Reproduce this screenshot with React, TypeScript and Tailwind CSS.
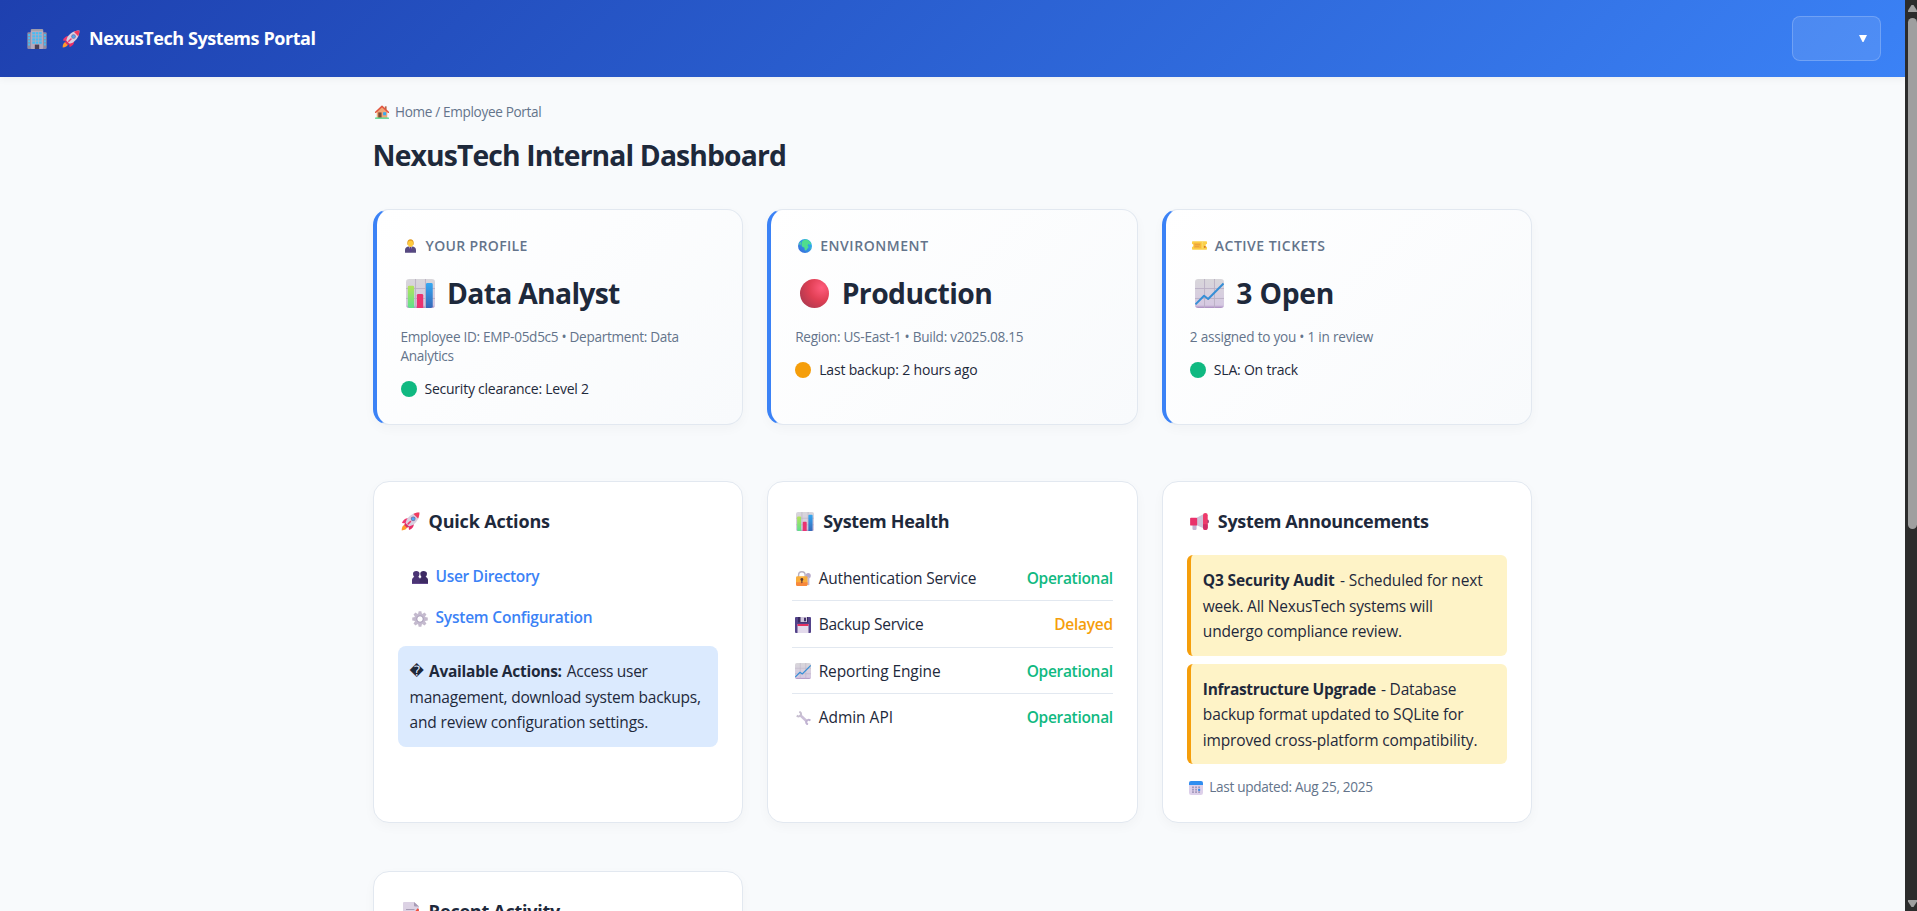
import type { ReactNode } from 'react';

type IconProps = { className?: string };

function Building({ className }: IconProps) {
  return (
    <svg className={className} viewBox="0 0 32 32">
      <rect x="0.5" y="5" width="9" height="27" rx="2" fill="#8f8aa3" />
      <rect x="22.5" y="5" width="9" height="27" rx="2" fill="#8f8aa3" />
      <rect x="6" y="0.5" width="20" height="31.5" rx="2.5" fill="#b5a9bd" />
      <rect x="6" y="0.5" width="20" height="2.5" rx="1.2" fill="#a3a0a8" />
      {[5, 10, 15, 20].map((y) => (
        <g key={y} fill="#45bdf5">
          <rect x="8.5" y={y} width="4.2" height="3.6" />
          <rect x="13.9" y={y} width="4.2" height="3.6" />
          <rect x="19.3" y={y} width="4.2" height="3.6" />
          <rect x="1.8" y={y + 3} width="3" height="3.4" />
          <rect x="27.2" y={y + 3} width="3" height="3.4" />
        </g>
      ))}
      <rect x="12.5" y="25" width="7" height="7" fill="#4a3f55" />
    </svg>
  );
}

function Rocket({ className }: IconProps) {
  return (
    <svg className={className} viewBox="0 0 32 32">
      <path d="M7 21c-4 1-6 5-5.800 10 5 0 8.500-2 9.800-6z" fill="#ff9a2b" />
      <path d="M12 10.500C8 10 3.500 13 1.500 18.500l7.500 1z" fill="#f0386e" />
      <path d="M21.500 20c.5 4-2.500 8.500-8 10.500l-1-7.500z" fill="#e92e68" />
      <path d="M31 1C22 1 14 5.500 9.500 13L7 20l5 5 7-2.500C26.500 18 31 10 31 1z" fill="#d9cfe0" />
      <path d="M31 1c0 4-.8 7.200-2.200 10L21 3.200C24 1.800 27.500 1 31 1z" fill="#f23a5e" />
      <path d="M7 18l7 7-4 1.500L5.500 22z" fill="#d92f66" />
      <path d="M12 20l4-4" stroke="#f0386e" strokeWidth="2.600" strokeLinecap="round" />
      <circle cx="20.500" cy="11.500" r="4" fill="#7c70a0" />
      <circle cx="20.500" cy="11.500" r="2.700" fill="#4ba8f5" />
    </svg>
  );
}

function House({ className }: IconProps) {
  return (
    <svg className={className} viewBox="0 0 32 32">
      <rect x="22.500" y="3" width="4" height="8" fill="#b5684a" />
      <path d="M4 15L16 4l12 11v14H4z" fill="#f0a878" />
      <path d="M1.500 16.500L16 3l14.500 13.500" fill="none" stroke="#e2553f" strokeWidth="3.600" strokeLinecap="round" strokeLinejoin="round" />
      <rect x="7.500" y="17" width="7.500" height="12" fill="#7b4a35" />
      <rect x="18.500" y="16.500" width="7" height="7" fill="#38aaf0" />
      <rect x="0" y="28.500" width="32" height="3" rx="1.500" fill="#3fd07a" />
    </svg>
  );
}

function OfficeWorker({ className }: IconProps) {
  return (
    <svg className={className} viewBox="0 0 26 32">
      <path d="M0 32v-7c0-5 4-8 9-8h8c5 0 9 3 9 8v7z" fill="#564a80" />
      <path d="M9.500 17L13 27l3.500-10z" fill="#e9e2f2" />
      <path d="M11.400 18h3.200l1 8-2.600 5-2.600-5z" fill="#5a3f8c" />
      <path d="M5.500 8c0-5 3-8 7.500-8s7.500 3 7.500 8v5H5.500z" fill="#e09a1f" />
      <path d="M7 8.500C7 5 9.500 3.500 13 3.500s6 1.500 6 5V12c0 4-3 6.500-6 6.500S7 16 7 12z" fill="#ffcb3d" />
    </svg>
  );
}

function Globe({ className }: IconProps) {
  return (
    <svg className={className} viewBox="0 0 32 32">
      <defs>
        <linearGradient id="sea" x1="1" y1="0" x2="0" y2="1">
          <stop offset="0" stopColor="#27c2f2" />
          <stop offset="1" stopColor="#3b62d8" />
        </linearGradient>
      </defs>
      <circle cx="16" cy="16" r="16" fill="url(#sea)" />
      <path d="M9 6c3-4 8-5.500 12-4.500 4 1.500 7.500 5 9 9.500l-3 2-3-2-2 4 2.500 3-3 4.500-3 4-3-1-1-6-4-1.500L8 14z" fill="#4fdd8e" />
      <path d="M2 11l4-5 2 3-3 6zM27 21l2.500-3-1.500 6z" fill="#49cfa0" />
    </svg>
  );
}

function Ticket({ className }: IconProps) {
  return (
    <svg className={className} viewBox="0 0 32 18">
      <path d="M1.500 0h29A1.500 1.500 0 0 1 32 1.500V6a3 3 0 0 0 0 6v4.500a1.500 1.500 0 0 1-1.500 1.500h-29A1.500 1.500 0 0 1 0 16.500V12a3 3 0 0 0 0-6V1.500A1.500 1.500 0 0 1 1.500 0z" fill="#fbd04a" />
      <rect x="4" y="3" width="15" height="12" rx="1" fill="#f7b63c" />
      <path d="M6 7h11M6 11h9" stroke="#e39a42" strokeWidth="1.500" />
      <path d="M22.500 1v16" stroke="#f7e7a0" strokeWidth="1.500" strokeDasharray="2 2" />
      <rect x="25.500" y="10" width="3.500" height="4" fill="#d57a2c" />
    </svg>
  );
}

function GridPaper({ id }: { id: string }) {
  return (
    <>
      <defs>
        <linearGradient id={id} x1="0" y1="0" x2="0" y2="1">
          <stop offset="0" stopColor="#d8d6da" />
          <stop offset="0.900" stopColor="#d6c9e2" />
          <stop offset="1" stopColor="#a98cc0" />
        </linearGradient>
      </defs>
      <rect width="32" height="32" rx="3.500" fill={`url(#${id})`} />
      <path d="M0 10.500h32M0 21.500h32M10.500 0v32M21.500 0v32" stroke="#b9b0c4" strokeWidth="1" />
    </>
  );
}

function BarChart({ className }: IconProps) {
  return (
    <svg className={className} viewBox="0 0 32 32" preserveAspectRatio="none">
      <defs>
        <linearGradient id="barGreen" x1="0" y1="0" x2="0" y2="1">
          <stop offset="0" stopColor="#b4e35a" />
          <stop offset="1" stopColor="#5fe08c" />
        </linearGradient>
        <linearGradient id="barBlue" x1="0" y1="0" x2="0" y2="1">
          <stop offset="0" stopColor="#35a8f2" />
          <stop offset="1" stopColor="#3768b8" />
        </linearGradient>
      </defs>
      <GridPaper id="paperBars" />
      <path d="M2 9a1.500 1.500 0 0 1 1.500-1.500H7.500A1.500 1.500 0 0 1 9 9v23H4l-2-1z" fill="url(#barGreen)" />
      <path d="M12 18a1.500 1.500 0 0 1 1.500-1.500h4A1.500 1.500 0 0 1 19 18v14h-7z" fill="#ea3370" />
      <path d="M22 6a1.500 1.500 0 0 1 1.500-1.500h4.500A1.500 1.500 0 0 1 29.500 6v25l-2 1H22z" fill="url(#barBlue)" />
    </svg>
  );
}

function LineChart({ className }: IconProps) {
  return (
    <svg className={className} viewBox="0 0 32 32">
      <GridPaper id="paperLine" />
      <path d="M0.500 28L10 18.500l4.500 3.500L31.500 5" fill="none" stroke="#368fd6" strokeWidth="2.200" strokeLinejoin="round" />
    </svg>
  );
}

function RedBall({ className }: IconProps) {
  return (
    <svg className={className} viewBox="0 0 32 32">
      <defs>
        <radialGradient id="ball" cx="0.750" cy="0.300" r="0.800">
          <stop offset="0" stopColor="#ff5c7c" />
          <stop offset="0.550" stopColor="#e03f54" />
          <stop offset="1" stopColor="#b53a50" />
        </radialGradient>
      </defs>
      <circle cx="16" cy="16" r="16" fill="url(#ball)" />
    </svg>
  );
}

function People({ className }: IconProps) {
  return (
    <svg className={className} viewBox="0 0 32 26">
      <g fill="#4b3474">
        <path d="M2 5.500C2 2 4.500 0 8.500 0S15 2 15 5.500c0 4-2.500 8-6.500 8S2 9.500 2 5.500z" />
        <path d="M0 26v-8c0-4 3-6.500 6.500-6.500h4c3.500 0 6 2.500 6 6.500v8z" />
      </g>
      <g fill="#3d2a63">
        <path d="M16.500 5.500C16.500 2 19 0 23 0s7 2 7 5.500c0 4-3 8-7 8s-6.500-4-6.500-8z" />
        <path d="M15.500 26v-8c0-4 2.500-6.500 6-6.500h4c3.500 0 6.500 2.500 6.500 6.500v8z" />
      </g>
      <path d="M0 24.500h32V26H0z" fill="#6a4f94" />
    </svg>
  );
}

function Gear({ className }: IconProps) {
  return (
    <svg className={className} viewBox="0 0 32 32">
      <g fill="#c4bacd">
        {[0, 45, 90, 135, 180, 225, 270, 315].map((a) => (
          <path key={a} d="M13.200 0.500h5.600l1 6h-7.600z" transform={`rotate(${a} 16 16)`} />
        ))}
      </g>
      <circle cx="16" cy="16" r="8.800" fill="none" stroke="#c4bacf" strokeWidth="5" />
      <circle cx="16" cy="16" r="6.500" fill="none" stroke="#a396b3" strokeWidth="1.800" />
    </svg>
  );
}

function LockKey({ className }: IconProps) {
  return (
    <svg className={className} viewBox="0 0 32 32">
      <circle cx="26" cy="10" r="5.500" fill="#b7a9c9" />
      <path d="M24 13h4.500v15l-2.200 3-2.300-3z" fill="#c3b6d2" />
      <path d="M5.500 13V8.500a7 7 0 0 1 14 0V13" fill="none" stroke="#b9b1c2" strokeWidth="3" />
      <rect y="11" width="24.500" height="21" rx="3" fill="#f9ad3b" />
      <path d="M0 24h24.500v5a3 3 0 0 1-3 3H3a3 3 0 0 1-3-3z" fill="#f7883d" />
      <circle cx="12.500" cy="18" r="3" fill="#5a3a3a" />
      <rect x="11.300" y="18" width="2.400" height="8" rx="1" fill="#5a3a3a" />
    </svg>
  );
}

function Floppy({ className }: IconProps) {
  return (
    <svg className={className} viewBox="0 0 32 32">
      <path d="M2 0h28a2 2 0 0 1 2 2v28a2 2 0 0 1-2 2H2a2 2 0 0 1-2-2V2a2 2 0 0 1 2-2z" fill="#53438a" />
      <path d="M6 0h20v11H6z" fill="#3a2a60" />
      <path d="M11 0h13v10H11z" fill="#cfc6da" />
      <rect x="18" y="1.500" width="4" height="7" fill="#43326c" />
      <rect x="5" y="14" width="22" height="18" fill="#e3daec" />
      <rect x="5" y="14" width="22" height="4" fill="#e4305f" />
    </svg>
  );
}

function Wrench({ className }: IconProps) {
  return (
    <svg className={className} viewBox="0 0 32 30">
      <path d="M8 8l16 15" stroke="#cbbfd8" strokeWidth="5.500" />
      <path d="M7 1.500c3 1.500 4.500 4 3.500 7-1.500 3.500-5.500 4-9 1.500" fill="none" stroke="#c7bfd0" strokeWidth="4.200" />
      <path d="M25.500 29c-3-1.500-4.500-4-3.500-7 1.500-3.500 5.500-4 9-1.500" fill="none" stroke="#c0b2d1" strokeWidth="4.200" />
    </svg>
  );
}

function Megaphone({ className }: IconProps) {
  return (
    <svg className={className} viewBox="0 0 32 29">
      <path d="M4 19h7v8a2 2 0 0 1-2 2H6a2 2 0 0 1-2-2z" fill="#c3b2d2" />
      <path d="M11 8L25 1v26L11 21z" fill="#cdc3d8" />
      <rect y="8" width="12" height="13.500" rx="1.500" fill="#e9316b" />
      <ellipse cx="30" cy="14.500" rx="2" ry="3.500" fill="#8e3a6d" />
      <rect x="22" y="0" width="8" height="29" rx="4" fill="#ee3a6b" />
      <path d="M22 19h8v6a4 4 0 0 1-8 0z" fill="#cf2e66" />
    </svg>
  );
}

function Calendar({ className }: IconProps) {
  return (
    <svg className={className} viewBox="0 0 32 32">
      <rect width="32" height="32" rx="5" fill="#ddd0ea" />
      <path d="M5 0h22a5 5 0 0 1 5 5v4H0V5a5 5 0 0 1 5-5z" fill="#2f8ef0" />
      <g fill="#a196b8">
        {[12.5, 18, 23.5].map((y) =>
          [7, 14, 21].map((x) => <rect key={`${x}-${y}`} x={x} y={y} width="4.200" height="3.800" />),
        )}
      </g>
      <rect x="21" y="18" width="4.500" height="4.500" fill="#2f8ef0" />
    </svg>
  );
}

function Memo({ className }: IconProps) {
  return (
    <svg className={className} viewBox="0 0 32 38">
      <path d="M2 0h20l10 9v27a2 2 0 0 1-2 2H2a2 2 0 0 1-2-2V2a2 2 0 0 1 2-2z" fill="#dcd2e4" />
      <path d="M22 0l10 9h-8a2 2 0 0 1-2-2z" fill="#a79bb5" />
      <path d="M6 15h17M6 23h14" stroke="#a89db5" strokeWidth="2" />
      <path d="M31 14l-12 16" stroke="#f0503f" strokeWidth="5" />
    </svg>
  );
}

function StatCard({ icon, label, valueIcon, value, dot, status, children }: {
  icon: ReactNode; label: ReactNode; valueIcon: ReactNode; value: ReactNode; dot: string; status: ReactNode; children: ReactNode;
}) {
  return (
    <section className="h-54 rounded-2xl border border-l-4 border-[#e2e8f0] border-l-[#3b82f6] bg-linear-135 from-white to-[#f8fafc] px-6 pt-[25px] shadow-[0_4px_12px_rgba(0,0,0,0.03)]">
      <div className="flex h-5 items-center gap-[5px] text-[14px] font-semibold text-[#64748b]">
        <span className="flex w-5 justify-center pt-px">{icon}</span>
        {label}
      </div>
      <div className="mt-[15px] flex h-[46px] items-center gap-[7.5px] text-[28.3px] font-bold">
        <span className="flex w-[39px] justify-center">{valueIcon}</span>
        {value}
      </div>
      <div className="mt-[11px] text-[13.6px] leading-[19px] text-[#64748b]">{children}</div>
      <div className="mt-[11.5px] flex h-6 items-center gap-2 text-[14px]">
        <span className={`size-4 rounded-full ${dot}`} />
        {status}
      </div>
    </section>
  );
}

function Panel({ icon, title, className = '', children }: { icon: ReactNode; title: ReactNode; className?: string; children?: ReactNode }) {
  return (
    <section className={`rounded-2xl border border-[#e2e8f0] bg-white px-6 pt-[25px] shadow-[0_4px_12px_rgba(0,0,0,0.03)] ${className}`}>
      <h2 className="flex h-7 items-center gap-[5px] text-[18px] font-bold">
        <span className="flex w-[26px] justify-center">{icon}</span>
        {title}
      </h2>
      {children}
    </section>
  );
}

function ActionLink({ icon, children }: { icon: ReactNode; children: ReactNode }) {
  return (
    <a className="flex h-[41px] items-center gap-[7px] pl-[14px] font-semibold text-[#3b82f6]">
      <span className="flex w-[17px] justify-center pt-[2px]">{icon}</span>
      {children}
    </a>
  );
}

function HealthRow({ icon, name, state }: { icon: ReactNode; name: ReactNode; state: ReactNode }) {
  return (
    <li className="flex h-[46.6px] items-center border-b border-[#e2e8f0] pt-[2px] last:h-[45.6px] last:border-b-0">
      <span className="mr-[7.5px] ml-[3px] flex w-4 justify-center">{icon}</span>
      {name}
      <span className="ml-auto font-semibold">{state}</span>
    </li>
  );
}

function Notice({ children }: { children: ReactNode }) {
  return <div className="mb-2 h-[100.5px] rounded-md border-l-4 border-[#f59e0b] bg-[#fef3c7] px-3 pt-[13px] leading-[25.6px]">{children}</div>;
}

function Ok() {
  return <span className="tracking-[-0.31px] text-[#10b981]">Operational</span>;
}

export default function App() {
  return (
    <div className="flex h-screen overflow-hidden bg-[#f8fafc] font-['Open_Sans','Noto_Sans',sans-serif] text-[15.5px] whitespace-nowrap text-[#1e293b]">
      <div className="h-full min-w-0 flex-1 overflow-hidden">
        <header className="flex h-[77px] items-center justify-between bg-linear-135 from-[#1e40af] to-[#3b82f6] pr-6 pl-[27px] text-white shadow-[0_2px_8px_rgba(0,0,0,0.05)]">
          <div className="flex items-center text-[18px] font-bold">
            <Building className="size-5" />
            <Rocket className="ml-[15px] size-[18px]" />
            <span className="ml-[9px] tracking-[-0.43px]">NexusTech Systems Portal</span>
          </div>
          <button className="flex h-[45px] w-[89px] items-center justify-end rounded-lg border border-white/20 bg-white/10 pr-[13px]">
            <svg className="h-[7px] w-2" viewBox="0 0 8 7"><path d="M0 0h8L4.500 7h-1z" fill="#fff" /></svg>
          </button>
        </header>

        <main className="mx-auto w-[1160px] pt-6">
          <div className="flex h-[31px] items-start pl-[2.500px] text-[13.6px] text-[#64748b]">
            <span className="flex h-[22px] items-center">
              <House className="size-[14px]" />
              <span className="ml-[6px] tracking-[-0.34px]">Home / Employee Portal</span>
            </span>
          </div>
          <h1 className="h-[77px] text-[28.3px] leading-[46px] font-bold tracking-[-0.87px]">NexusTech Internal Dashboard</h1>

          <div className="grid grid-cols-3 gap-6">
            <StatCard
              icon={<OfficeWorker className="h-[14px] w-[11px]" />}
              label={<span className="tracking-[0.35px]">YOUR PROFILE</span>}
              valueIcon={<BarChart className="size-[29px]" />}
              value={<span className="tracking-[-0.70px]">Data Analyst</span>}
              dot="bg-[#10b981]"
              status={<span className="tracking-[-0.24px]">Security clearance: Level 2</span>}
            >
              <div className="tracking-[-0.30px]">Employee ID: EMP-05d5c5 • Department: Data</div>
              <div className="tracking-[-0.31px]">Analytics</div>
            </StatCard>
            <StatCard
              icon={<Globe className="size-[14px]" />}
              label={<span className="tracking-[0.56px]">ENVIRONMENT</span>}
              valueIcon={<RedBall className="size-[29px]" />}
              value={<span className="tracking-[-0.56px]">Production</span>}
              dot="bg-[#f59e0b]"
              status={<span className="tracking-[-0.17px]">Last backup: 2 hours ago</span>}
            >
              <div className="tracking-[-0.27px]">Region: US-East-1 • Build: v2025.08.15</div>
            </StatCard>
            <StatCard
              icon={<Ticket className="h-[9px] w-[15px]" />}
              label={<span className="tracking-[0.48px]">ACTIVE TICKETS</span>}
              valueIcon={<LineChart className="size-[29px]" />}
              value={<span className="tracking-[-0.24px]">3 Open</span>}
              dot="bg-[#10b981]"
              status={<span className="tracking-[-0.21px]">SLA: On track</span>}
            >
              <div className="tracking-[-0.24px]">2 assigned to you • 1 in review</div>
            </StatCard>
          </div>

          <div className="mt-14 grid grid-cols-3 gap-6">
            <Panel className="h-[342px]" icon={<Rocket className="size-[19px]" />} title={<span className="tracking-[-0.18px]">Quick Actions</span>}>
              <nav className="mt-[21px]">
                <ActionLink icon={<People className="h-[13px] w-4" />}><span className="tracking-[-0.32px]">User Directory</span></ActionLink>
                <ActionLink icon={<Gear className="size-4" />}><span className="tracking-[-0.21px]">System Configuration</span></ActionLink>
              </nav>
              <div className="mt-2 h-[100.8px] rounded-lg bg-[#dbeafe] px-3 pt-[13px] leading-[25.6px]">
                <div className="flex">
                  <span className="w-[19.500px] font-['DejaVu_Sans'] text-[14px]">�</span>
                  <strong className="tracking-[-0.26px]">Available Actions:</strong>
                  <span className="ml-[5px] tracking-[-0.30px]">Access user</span>
                </div>
                <div className="tracking-[-0.22px]">management, download system backups,</div>
                <div className="tracking-[-0.16px]">and review configuration settings.</div>
              </div>
            </Panel>

            <Panel className="h-[342px]" icon={<BarChart className="h-[19px] w-[18px]" />} title={<span className="tracking-[-0.33px]">System Health</span>}>
              <ul className="mt-[19.500px]">
                <HealthRow icon={<LockKey className="size-[15px]" />} name={<span className="tracking-[-0.18px]">Authentication Service</span>} state={<Ok />} />
                <HealthRow icon={<Floppy className="size-4" />} name={<span className="tracking-[-0.27px]">Backup Service</span>} state={<span className="tracking-[-0.27px] text-[#f59e0b]">Delayed</span>} />
                <HealthRow icon={<LineChart className="size-4" />} name={<span className="tracking-[-0.10px]">Reporting Engine</span>} state={<Ok />} />
                <HealthRow icon={<Wrench className="h-[14px] w-[15px]" />} name={<span className="tracking-[-0.02px]">Admin API</span>} state={<Ok />} />
              </ul>
            </Panel>

            <Panel className="h-[342px]" icon={<Megaphone className="h-[17px] w-[19px]" />} title={<span className="tracking-[-0.34px]">System Announcements</span>}>
              <div className="mt-5">
                <Notice>
                  <div>
                    <strong className="tracking-[-0.17px]">Q3 Security Audit</strong>
                    <span className="ml-[5.500px] tracking-[-0.12px]">- Scheduled for next</span>
                  </div>
                  <div className="tracking-[-0.23px]">week. All NexusTech systems will</div>
                  <div className="tracking-[-0.17px]">undergo compliance review.</div>
                </Notice>
                <Notice>
                  <div>
                    <strong className="tracking-[-0.32px]">Infrastructure Upgrade</strong>
                    <span className="ml-[5px] tracking-[-0.19px]">- Database</span>
                  </div>
                  <div className="tracking-[-0.14px]">backup format updated to SQLite for</div>
                  <div className="tracking-[-0.15px]">improved cross-platform compatibility.</div>
                </Notice>
              </div>
              <div className="mt-[12.500px] flex h-[22px] items-center pl-[2px] text-[13.6px] text-[#64748b]">
                <Calendar className="size-[14px]" />
                <span className="ml-[6.500px] tracking-[-0.31px]">Last updated: Aug 25, 2025</span>
              </div>
            </Panel>
          </div>

          <div className="mt-12 grid grid-cols-3 gap-6">
            <Panel className="h-60" icon={<Memo className="h-[19px] w-4" />} title={<span className="tracking-[-0.27px]">Recent Activity</span>} />
          </div>
        </main>
      </div>

      <div className="flex h-full w-3 flex-col items-end bg-[#2c2c2c]">
        <svg className="mt-[5px] h-[7px] w-[9px]" viewBox="0 0 9 7"><path d="M3.500 0h2L9 5.500V7H0V5.500z" fill="#9f9f9f" /></svg>
        <div className="mt-[6px] h-[511px] w-[9px] rounded-full bg-[#9f9f9f]" />
        <svg className="mt-auto mb-1 h-[7px] w-[9px]" viewBox="0 0 9 7"><path d="M0 0h9v1.500L5.500 7h-2L0 1.500z" fill="#9f9f9f" /></svg>
      </div>
    </div>
  );
}
